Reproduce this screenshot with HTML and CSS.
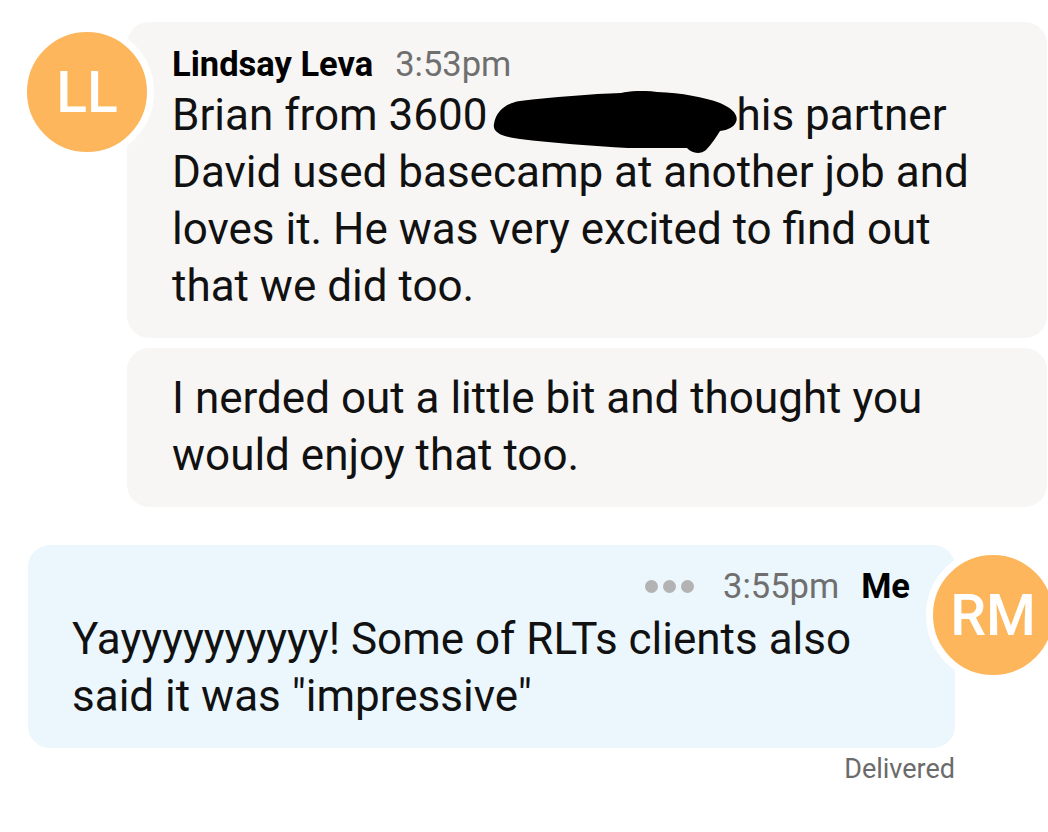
FILE: index.html
```html
<!DOCTYPE html>
<html lang="en">
<head>
  <meta charset="UTF-8" />
  <meta name="viewport" content="width=device-width, initial-scale=1.0" />
  <title>Chat – Lindsay Leva</title>
  <link rel="stylesheet" href="styles.css">
</head>
<body>
  <div class="thread">

    <!-- incoming -->
    <div class="group them">
      <div class="avatar">LL</div>
      <div class="bubbles">
        <div class="bubble">
          <div class="meta">
            <span class="name">Lindsay Leva</span>
            <span class="time">3:53pm</span>
          </div>
          <p class="text">Brian from 3600<span class="redact"><svg viewBox="0 0 246 63" width="246" height="63"><path d="M2 33 C4 20 14 12 28 10 C60 6 100 3 129 2 C138 0 150 -1 165 1 C190 2 212 6 228 12 C240 17 247 24 244 31 C242 36 236 39 228 40 C224 46 220 53 214 59 C208 64 199 62 195 57 C180 57 160 57 136 57 C100 55 60 52 28 48 C12 46 0 42 2 33 Z" fill="#000"/></svg></span>his partner David used basecamp at another job and loves it. He was very excited to find out that we did too.</p>
        </div>
        <div class="bubble">
          <p class="text">I nerded out a little bit and thought you would enjoy that too.</p>
        </div>
      </div>
    </div>

    <!-- outgoing -->
    <div class="group me">
      <div class="bubbles">
        <div class="bubble">
          <div class="meta">
            <span class="dots"><i></i><i></i><i></i></span>
            <span class="time">3:55pm</span>
            <span class="name">Me</span>
          </div>
          <p class="text">Yayyyyyyyyyy! Some of RLTs clients also said it was "impressive"</p>
        </div>
      </div>
      <div class="avatar">RM</div>
    </div>
    <div class="status">Delivered</div>

  </div>
</body>
</html>
```

FILE: styles.css
```css
html, body {
  margin: 0;
  padding: 0;
  overflow: hidden;
  background: #fff;
}
body {
  font-family: Roboto, 'Noto Sans', sans-serif;
  color: #111;
}
.thread {
  padding-top: 22px;
}
.group {
  display: flex;
  align-items: flex-start;
}
.avatar {
  flex-shrink: 0;
  width: 120px;
  height: 120px;
  margin-top: 3px;
  border: 7px solid #fff;
  border-radius: 50%;
  background: #fdb65b;
  color: #fff;
  font-size: 57px;
  font-weight: 500;
  display: flex;
  align-items: center;
  justify-content: center;
  position: relative;
  z-index: 1;
}
.bubbles {
  flex-shrink: 0;
  display: flex;
  flex-direction: column;
  gap: 10px;
}
.bubble {
  border-radius: 22px;
  padding: 22px 40px 23px 45px;
}
.text {
  margin: 0;
  font-size: 44px;
  line-height: 57px;
}
.meta {
  display: flex;
  align-items: baseline;
  gap: 22px;
  font-size: 34.5px;
  line-height: 40px;
  margin-bottom: 3px;
}
.name {
  font-weight: 700;
  color: #000;
}
.time {
  color: #6f6f6f;
}

/* incoming side */
.them {
  padding-left: 20px;
}
.them .avatar {
  margin-right: -27px;
}
.them .bubbles {
  width: 920px;
}
.them .bubble {
  background: #f7f6f4;
  padding-right: 55px;
}
.them .bubble + .bubble {
  padding-top: 22px;
  padding-bottom: 23px;
}

.redact {
  display: inline-block;
  width: 249px;
  height: 0;
  position: relative;
}
.redact svg {
  position: absolute;
  left: 5px;
  top: -39px;
}

/* outgoing side */
.me {
  margin-top: 38px;
  padding-left: 28px;
}
.me .bubbles {
  width: 927px;
}
.me .bubble {
  background: #ebf7fc;
  padding: 21px 45px 23px 44px;
}
.me .meta {
  justify-content: flex-end;
  margin-bottom: 5px;
}
.me .avatar {
  margin-left: -29px;
}
.dots {
  display: flex;
  gap: 5px;
  align-self: center;
  margin-right: 7px;
}
.dots i {
  width: 13px;
  height: 13px;
  border-radius: 50%;
  background: #b3b3b3;
}
.status {
  width: 927px;
  padding-left: 28px;
  margin-top: 5px;
  text-align: right;
  font-size: 27px;
  line-height: 32px;
  color: #6b6b6b;
}
```
